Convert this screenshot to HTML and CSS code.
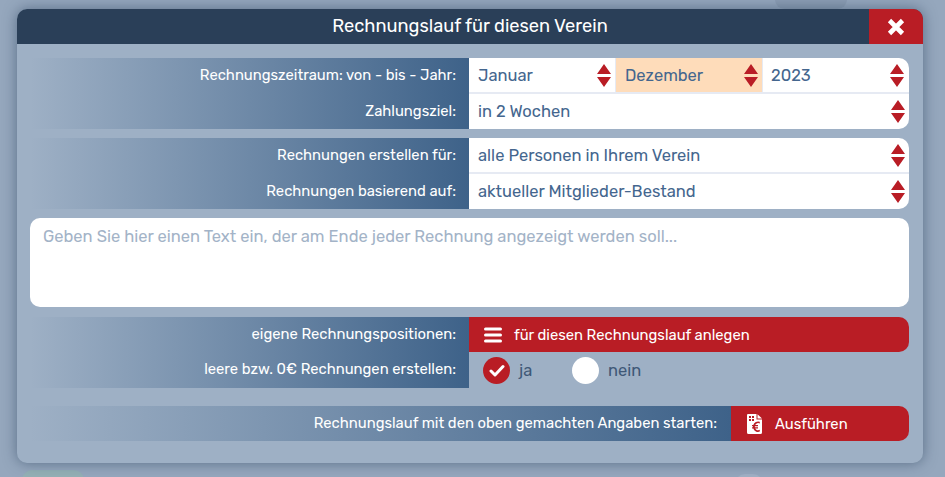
FILE: index.html
```html
<!DOCTYPE html>
<html lang="de">
<head>
<meta charset="utf-8">
<title>Rechnungslauf</title>
<link rel="stylesheet" href="styles.css">
</head>
<body>
<div class="ghost ghost-top"></div>
<div class="ghost ghost-green"></div>
<div class="ghost ghost-bottom"></div>
<main class="modal">
  <header class="modal-head">
    <h1 class="modal-title">Rechnungslauf für diesen Verein</h1>
    <button class="close" aria-label="Schließen">
      <svg width="18" height="18" viewBox="0 0 18 18"><path d="M2.500 2.500 15.500 15.500M15.500 2.500 2.500 15.500" class="x-stroke"/></svg>
    </button>
  </header>
  <div class="modal-body">
    <section class="group">
      <div class="row">
        <div class="label">Rechnungszeitraum: von - bis - Jahr:</div>
        <div class="field split top-r">
          <div class="sel"><span>Januar</span><svg class="arrows" viewBox="0 0 14 23"><path d="M7 0 14 10H0ZM0 13H14L7 23Z"/></svg></div>
          <div class="sel peach"><span>Dezember</span><svg class="arrows" viewBox="0 0 14 23"><path d="M7 0 14 10H0ZM0 13H14L7 23Z"/></svg></div>
          <div class="sel"><span>2023</span><svg class="arrows" viewBox="0 0 14 23"><path d="M7 0 14 10H0ZM0 13H14L7 23Z"/></svg></div>
        </div>
      </div>
      <div class="row">
        <div class="label">Zahlungsziel:</div>
        <div class="field bottom-r"><div class="sel"><span>in 2 Wochen</span><svg class="arrows" viewBox="0 0 14 23"><path d="M7 0 14 10H0ZM0 13H14L7 23Z"/></svg></div></div>
      </div>
    </section>
    <section class="group">
      <div class="row">
        <div class="label">Rechnungen erstellen für:</div>
        <div class="field top-r"><div class="sel"><span>alle Personen in Ihrem Verein</span><svg class="arrows" viewBox="0 0 14 23"><path d="M7 0 14 10H0ZM0 13H14L7 23Z"/></svg></div></div>
      </div>
      <div class="row">
        <div class="label">Rechnungen basierend auf:</div>
        <div class="field bottom-r"><div class="sel"><span>aktueller Mitglieder-Bestand</span><svg class="arrows" viewBox="0 0 14 23"><path d="M7 0 14 10H0ZM0 13H14L7 23Z"/></svg></div></div>
      </div>
    </section>
    <div class="textbox">Geben Sie hier einen Text ein, der am Ende jeder Rechnung angezeigt werden soll...</div>
    <section class="group group-plain">
      <div class="row">
        <div class="label">eigene Rechnungspositionen:</div>
        <button class="red-btn wide">
          <svg class="menu-icon" width="18" height="16" viewBox="0 0 18 16"><path d="M1.5 2H16.500M1.5 8H16.500M1.5 14H16.500"/></svg>
          <span>für diesen Rechnungslauf anlegen</span>
        </button>
      </div>
      <div class="row">
        <div class="label">leere bzw. 0€ Rechnungen erstellen:</div>
        <div class="radios">
          <div class="radio-item">
            <span class="radio on"><svg width="16" height="13" viewBox="0 0 16 13"><path d="M2 7 6 11 14 2.500"/></svg></span>
            <span class="radio-text">ja</span>
          </div>
          <div class="radio-item">
            <span class="radio"></span>
            <span class="radio-text">nein</span>
          </div>
        </div>
      </div>
    </section>
    <section class="row run">
      <div class="label">Rechnungslauf mit den oben gemachten Angaben starten:</div>
      <button class="red-btn run-btn">
        <svg class="doc-icon" width="15" height="20" viewBox="0 0 15 20"><path fill-rule="evenodd" d="M1 0H9.500V5.500H15V18.500Q15 20 13.500 20H1.500Q0 20 0 18.500V1Q0 0 1 0ZM10.500 .3 15 4.500H10.500ZM2 2V4H4V2ZM5 2V4H7V2ZM2 5V7H4V5ZM5 5V7H7V5ZM12.800 9.500V7.700A5 5 0 0 0 6.300 11H5V12.200H6V13.200H5V14.400H6.300A5 5 0 0 0 12.800 17.600V15.800A3.200 3.200 0 0 1 8.200 14.400H11V13.200H7.900V12.200H11V11H8.200A3.200 3.200 0 0 1 12.800 9.500Z"/></svg>
        <span>Ausführen</span>
      </button>
    </section>
  </div>
</main>
</body>
</html>
```
FILE: styles.css
```css
* { box-sizing: border-box; }
html, body { margin: 0; height: 477px; overflow: hidden; }
body {
  background: #95a7bd;
  font-family: "Rubik", "Inter", "Roboto", "Liberation Sans", sans-serif;
  padding: 9px 22px 0 17px;
  position: relative;
}
.ghost { position: absolute; border-radius: 10px; }
.ghost-top { left: 775px; top: -10px; width: 72px; height: 19px; background: #8b9db3; }
.ghost-green { left: 22px; top: 470px; width: 62px; height: 20px; background: #94b0b5; }
.ghost-bottom { left: 735px; top: 474px; width: 28px; height: 20px; background: #a0b0c4; border-radius: 20px; }
.modal {
  position: relative;
  width: 906px;
  height: 454px;
  background: #9eb0c5;
  border-radius: 10px;
  box-shadow: 0 0 14px rgba(40, 62, 90, .55);
}
.modal-head {
  height: 35px;
  background: #2a3f58;
  border-radius: 10px 10px 0 0;
  overflow: hidden;
  position: relative;
}
.modal-title {
  margin: 0;
  text-align: center;
  color: #fff;
  font-size: 18.25px;
  font-weight: 400;
  line-height: 35px;
}
.close {
  position: absolute;
  top: 0;
  right: 0;
  width: 54px;
  height: 35px;
  padding: 0;
  border: 0;
  background: #b91d25;
  display: flex;
  align-items: center;
  justify-content: center;
}
.x-stroke { stroke: #fff; stroke-width: 4.600; stroke-linecap: butt; fill: none; }
.modal-body {
  padding: 14px 14px 0 13px;
  display: flex;
  flex-direction: column;
}
.group { margin-bottom: 9px; }
.row { display: flex; height: 35px; }
.group .row:nth-child(1) { height: 36px; }
.group-plain .row:nth-child(1) { height: 35px; }
.group-plain .row:nth-child(2) { height: 36px; }
.label {
  width: 439px;
  flex: none;
  background: linear-gradient(90deg, rgba(62, 98, 137, 0) 0, #3e6289 100%);
  color: #fff;
  font-size: 14.8px;
  text-align: right;
  padding-right: 13px;
  line-height: 35px;
  white-space: nowrap;
}
.field { flex: 1; display: flex; background: #fff; min-width: 0; }
.top-r { border-radius: 0 10px 0 0; border-bottom: 2px solid #e6eaf3; }
.bottom-r { border-radius: 0 0 10px 0; }
.split .sel { flex: 1 1 0; }
.split .sel:last-child { padding-left: 8px; padding-right: 5px; }
.sel {
  flex: 1;
  min-width: 0;
  display: flex;
  align-items: center;
  justify-content: space-between;
  padding: 0 4px 0 9px;
  color: #44668e;
  font-size: 16.5px;
}
.split .sel + .sel { border-left: 1px solid #e6eaf3; }
.peach { background: #fedcba; }
.arrows { width: 14px; height: 23px; fill: #b91d25; flex: none; }
.textbox {
  height: 89px;
  background: #fff;
  border-radius: 10px;
  color: #a3b3c7;
  font-size: 16.55px;
  padding: 9px 13px;
  margin-bottom: 10px;
}
.group-plain { margin-bottom: 18px; }
.red-btn {
  flex: 1;
  display: flex;
  align-items: center;
  border: 0;
  padding: 0;
  background: #b91d25;
  color: #fff;
  font-family: inherit;
  font-size: 14.8px;
}
.wide { border-radius: 0 10px 10px 0; padding-left: 15px; gap: 12px; }
.menu-icon path { stroke: #fff; stroke-width: 3; stroke-linecap: round; fill: none; }
.radios { display: flex; align-items: center; flex: 1; padding-left: 14px; }
.radio-item { display: flex; align-items: center; gap: 9px; width: 89px; }
.radio {
  width: 27px;
  height: 27px;
  border-radius: 50%;
  background: #fff;
  display: flex;
  align-items: center;
  justify-content: center;
}
.radio.on { background: #b91d25; }
.radio path { stroke: #fff; stroke-width: 3; stroke-linecap: round; stroke-linejoin: round; fill: none; }
.radio-text { color: #3f5877; font-size: 16.5px; }
.run .label { width: 701px; padding-right: 14px; }
.run-btn { border-radius: 0 10px 10px 0; padding-left: 16px; gap: 13px; font-size: 14.8px; }
.doc-icon { fill: #fff; }
```
